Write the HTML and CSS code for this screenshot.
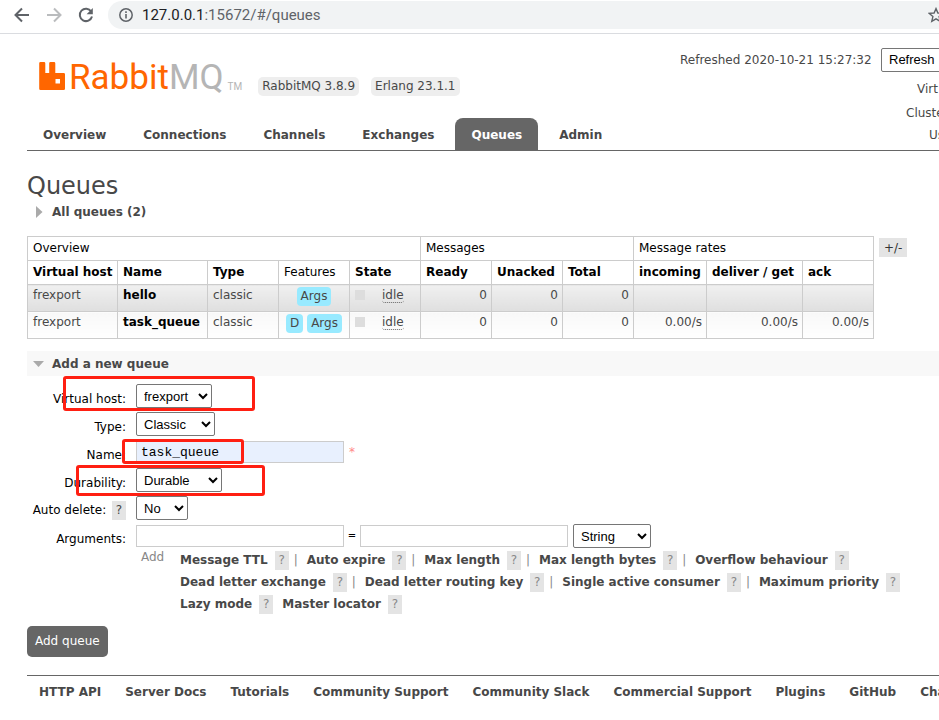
FILE: index.html
```html
<!DOCTYPE html>
<html lang="en">
<head>
<meta charset="utf-8">
<title>RabbitMQ Management</title>
<link rel="stylesheet" href="styles.css">
</head>
<body>
<div class="browser-bar">
  <button class="bar-btn" aria-label="Back"><svg width="16" height="16" viewBox="0 0 16 16" fill="none" stroke="#5f6368" stroke-width="2"><path d="M15 8H2M8 1.500 1.500 8 8 14.500"/></svg></button>
  <button class="bar-btn" aria-label="Forward"><svg width="16" height="16" viewBox="0 0 16 16" fill="none" stroke="#babcbe" stroke-width="2"><path d="M1 8h13M8 1.500 14.500 8 8 14.500"/></svg></button>
  <button class="bar-btn" aria-label="Reload"><svg width="16" height="16" viewBox="0 0 16 16"><path d="M13.200 4.500A6.200 6.200 0 1 0 14 9.500" fill="none" stroke="#5f6368" stroke-width="2"/><path d="M14.800 1v6.200H8.600z" fill="#5f6368"/></svg></button>
  <div class="address">
    <svg width="14" height="14" viewBox="0 0 14 14"><circle cx="7" cy="7" r="6.200" fill="none" stroke="#5f6368" stroke-width="1.500"/><path d="M6.200 6h1.600v4.500H6.200zM6.200 3.300h1.600v1.600H6.200z" fill="#5f6368"/></svg>
    <span class="url"><b>127.0.0.1</b>:15672/#/queues</span>
    <svg class="star" width="16" height="16" viewBox="0 0 16 16" fill="none" stroke="#5f6368" stroke-width="1.400"><path d="M8 1.600 9.900 6l4.800.4-3.600 3.200 1.100 4.700L8 11.800l-4.200 2.500 1.100-4.700L1.300 6.400 6.100 6z"/></svg>
  </div>
</div>

<div class="page">
  <header class="top">
    <div class="brand">
      <a class="logo" href="#/">
        <svg width="27" height="28" viewBox="0 0 27 28"><path fill="#f60" fill-rule="evenodd" d="M1.500 0h3.500a1.300 1.300 0 0 1 1.300 1.300V11h3.900V1.300A1.300 1.300 0 0 1 11.500 0H15a1.300 1.300 0 0 1 1.300 1.300V11h8.400a1.300 1.300 0 0 1 1.300 1.300v14.400a1.300 1.300 0 0 1-1.300 1.300H1.500A1.300 1.300 0 0 1 .2 26.700V1.300A1.300 1.300 0 0 1 1.500 0zM16.500 17h4.500v4.500h-4.500z"/></svg>
        <span class="logo-name">Rabbit<span class="logo-mq">MQ</span></span><span class="logo-tm">TM</span>
      </a>
      <span class="version">RabbitMQ 3.8.9</span>
      <span class="version">Erlang 23.1.1</span>
    </div>
    <div class="status">
      <div class="refresh"><span>Refreshed 2020-10-21 15:27:32</span><button class="refresh-btn">Refresh</button></div>
      <div class="status-vhost">Virt</div>
      <div class="status-cluster">Cluste</div>
      <div class="status-user">Us</div>
    </div>
  </header>
  <nav class="tabs">
    <a href="#/">Overview</a><a href="#/connections">Connections</a><a href="#/channels">Channels</a><a href="#/exchanges">Exchanges</a><a class="selected" href="#/queues">Queues</a><a href="#/users">Admin</a>
  </nav>

  <main>
    <h1>Queues</h1>
    <h2 class="section"><svg width="7" height="12" viewBox="0 0 7 12"><path d="M0 0l6.500 6L0 12z" fill="#aaa"/></svg>All queues (2)</h2>

    <div class="table-wrap">
      <table class="list">
        <colgroup><col class="c-wide"><col class="c-wide"><col><col><col><col><col><col><col class="c-in"><col class="c-get"><col></colgroup>
        <thead>
          <tr class="groups"><th colspan="5">Overview</th><th colspan="3">Messages</th><th colspan="3">Message rates</th></tr>
          <tr><th>Virtual host</th><th>Name</th><th>Type</th><th class="plain">Features</th><th>State</th><th>Ready</th><th>Unacked</th><th>Total</th><th>incoming</th><th>deliver / get</th><th>ack</th></tr>
        </thead>
        <tbody>
          <tr class="alt1"><td>frexport</td><td><a href="#/queues/hello">hello</a></td><td>classic</td><td class="c"><span class="tag">Args</span></td><td><span class="state"><i></i><abbr>idle</abbr></span></td><td class="r">0</td><td class="r">0</td><td class="r">0</td><td></td><td></td><td></td></tr>
          <tr class="alt2"><td>frexport</td><td><a href="#/queues/task_queue">task_queue</a></td><td>classic</td><td class="c"><span class="tag">D</span> <span class="tag">Args</span></td><td><span class="state"><i></i><abbr>idle</abbr></span></td><td class="r">0</td><td class="r">0</td><td class="r">0</td><td class="r">0.00/s</td><td class="r">0.00/s</td><td class="r">0.00/s</td></tr>
        </tbody>
      </table>
      <button class="columns-btn">+/-</button>
    </div>

    <h2 class="section open"><svg width="11" height="6" viewBox="0 0 11 6"><path d="M0 0h11L5.500 6z" fill="#aaa"/></svg>Add a new queue</h2>

    <form class="add-form">
      <div class="row"><label for="vhost">Virtual host:</label><div class="field"><select id="vhost" class="w76"><option>frexport</option></select></div><span class="mark mark-vhost"></span></div>
      <div class="row"><label for="type">Type:</label><div class="field"><select id="type" class="w79"><option>Classic</option></select></div></div>
      <div class="row"><label for="name">Name:</label><div class="field"><input id="name" class="filled" type="text" value="task_queue"><span class="required">*</span></div><span class="mark mark-name"></span></div>
      <div class="row"><label for="durable">Durability:</label><div class="field"><select id="durable" class="w86"><option>Durable</option></select></div><span class="mark mark-durable"></span></div>
      <div class="row"><label for="auto">Auto delete: <span class="help dark">?</span></label><div class="field"><select id="auto" class="w52"><option>No</option></select></div></div>
      <div class="row"><label for="argk">Arguments:</label><div class="field"><input id="argk" type="text"><span class="equals">=</span><input type="text" aria-label="Argument value"><select class="w78 arg-type" aria-label="Argument type"><option>String</option></select></div></div>
      <div class="presets">
        <span class="add">Add</span>
        <div class="preset-lines">
          <div><a href="#">Message TTL</a><span class="help">?</span><s>|</s><a href="#">Auto expire</a><span class="help">?</span><s>|</s><a href="#">Max length</a><span class="help">?</span><s>|</s><a href="#">Max length bytes</a><span class="help">?</span><s>|</s><a href="#">Overflow behaviour</a><span class="help">?</span></div>
          <div><a href="#">Dead letter exchange</a><span class="help">?</span><s>|</s><a href="#">Dead letter routing key</a><span class="help">?</span><s>|</s><a href="#">Single active consumer</a><span class="help">?</span><s>|</s><a href="#">Maximum priority</a><span class="help">?</span></div>
          <div><a href="#">Lazy mode</a><span class="help last">?</span><a href="#">Master locator</a><span class="help">?</span></div>
        </div>
      </div>
      <button class="submit" type="button">Add queue</button>
    </form>
  </main>

  <footer><a href="#">HTTP API</a><a href="#">Server Docs</a><a href="#">Tutorials</a><a href="#">Community Support</a><a href="#">Community Slack</a><a href="#">Commercial Support</a><a href="#">Plugins</a><a href="#">GitHub</a><a href="#">Changelog</a></footer>
</div>
</body>
</html>
```
FILE: styles.css
```css
* { box-sizing: border-box; }
body {
  margin: 0;
  background: #fff;
  color: #484848;
  font: 12px/16px Verdana, "DejaVu Sans", sans-serif;
  overflow: hidden;
}
a { color: inherit; text-decoration: none; }
button { font: inherit; cursor: pointer; }

/* Browser toolbar */
.browser-bar {
  display: flex;
  align-items: center;
  gap: 16px;
  height: 34px;
  padding: 0 0 4px 14px;
  border-bottom: 1px solid #dadce0;
}
.bar-btn { display: flex; padding: 0; border: 0; background: none; }
.address {
  display: flex;
  flex: 1;
  align-items: center;
  height: 28px;
  padding-left: 11px;
  background: #f1f3f4;
  border-radius: 14px 0 0 14px;
  overflow: hidden;
}
.bar-btn:nth-child(3) { margin-right: -2px; }
.url { margin-left: 9px; color: #5f6368; font: 15px/20px Roboto, sans-serif; }
.url b { color: #202124; font-weight: 400; }
.star { flex: none; margin: 0 -5px 0 auto; }

.page { padding-left: 27px; }

/* Header */
.top { display: flex; justify-content: space-between; height: 84px; }
.brand { display: flex; align-items: flex-start; white-space: nowrap; }
.logo { display: flex; margin: 28px 16px 0 12px; height: 34px; }
.logo-name { margin-left: 3px; color: #f60; font: 35px/32px Roboto, sans-serif; }
.logo-mq { color: #b5b5b5; }
.logo-tm { margin: 17px 0 0 4px; color: #b5b5b5; font: 10px/16px Roboto, sans-serif; }
.version { margin: 43px 12px 0 0; padding: 2px 4px; line-height: 15px; background: #eee; border-radius: 5px; }
.status { width: 259px; white-space: nowrap; line-height: 24px; }
.refresh { display: flex; align-items: center; justify-content: space-between; height: 24px; margin: 14px 0 5px; }
.refresh-btn {
  flex: none;
  width: 68px;
  height: 24px;
  margin-right: -10px;
  padding: 0 7px;
  text-align: left;
  color: #000;
  background: #fff;
  border: 1px solid #767676;
  border-radius: 2px;
  font: 13px/20px "Liberation Sans", sans-serif;
}
.status-vhost { padding-left: 237px; }
.status-cluster { padding-left: 226px; }
.status-user { padding-left: 249px; line-height: 20px; }

/* Tabs */
.tabs { display: flex; gap: 5px; border-bottom: 1px solid #666; font-weight: 700; }
.tabs a { padding: 9px 16px 7px; border-radius: 8px 8px 0 0; }
.tabs .selected { color: #fff; background: #666; }

/* Headings */
h1 { margin: 20px 0 0; font-size: 24px; line-height: 30px; font-weight: 400; }
h2.section { display: flex; align-items: center; gap: 9px; margin: 0 0 12px; padding: 3px 0 4px 9px; font-size: 12px; line-height: 16px; }
h2.open { margin: 12px 0 6px; padding: 5px 0 4px 6px; background: #f8f8f8; gap: 8px; }

/* Queue table */
.table-wrap { display: flex; align-items: flex-start; gap: 5px; }
.list { width: 847px; border-collapse: collapse; table-layout: fixed; white-space: nowrap; }
.c-wide { width: 90px; }
.c-in { width: 73px; }
.c-get { width: 96px; }
.list th, .list td { padding: 2px 5px; border: 1px solid #ccc; text-align: left; vertical-align: top; }
.list th { height: 24px; padding-top: 3px; color: #000; }
.groups th, .list th.plain { font-weight: 400; }
.list td { height: 27px; }
.list td a { color: #000; font-weight: 700; }
.list .r { text-align: right; padding-right: 4px; }
.list .c { text-align: center; }
.alt1 td { background: linear-gradient(#f0f0f0, #dfdfdf); }
.alt2 td { background: linear-gradient(#f8f8f8, #fff); }
.tag { display: inline-block; padding: 1px 4px; line-height: 17px; background: #98eaff; border-radius: 4px; }
.state { display: flex; gap: 17px; }
.state i { width: 10px; height: 10px; margin-top: 3px; background: #ddd; }
.state abbr { height: 16px; border-bottom: 1px dotted #666; border-radius: 3px; }
.columns-btn { margin-top: 2px; padding: 0 5px; height: 19px; border: 0; background: #e4e4e4; color: #333; }

/* Add queue form */
.row { position: relative; display: flex; align-items: center; height: 28px; color: #000; }
.row label { width: 99px; padding-top: 5px; text-align: right; white-space: nowrap; }
.row .field { display: flex; align-items: center; margin-left: 10px; }
select {
  height: 24px;
  padding: 0 3px;
  color: #000;
  background: #fff;
  border: 1px solid #767676;
  border-radius: 2px;
  font: 13px/20px "Liberation Sans", sans-serif;
}
.w52 { width: 52px; }
.w76 { width: 76px; }
.w78 { width: 78px; }
.w79 { width: 79px; }
.w86 { width: 86px; }
.arg-type { margin-left: 5px; }
input {
  width: 208px;
  height: 22px;
  padding: 2px 4px;
  border: 1px solid #ccc;
  color: #000;
  font: 13px/16px "Liberation Mono", monospace;
}
.filled { background: #e8f0fe; }
.required { margin-left: 5px; color: #f88; }
.equals { width: 16px; text-align: center; font-size: 10px; }
.help { display: inline-block; width: 14px; height: 19px; line-height: 19px; text-align: center; color: #888; background: #e4e4e4; }
.help.dark { margin-left: 2px; color: #484848; }

/* Red frames laid over the form */
.mark { position: absolute; border: 3px solid #ff1f12; border-radius: 3px; z-index: 1; pointer-events: none; }
.mark-vhost { left: 36px; top: -6px; width: 192px; height: 35px; }
.mark-name { left: 95px; top: 1px; width: 122px; height: 25px; }
.mark-durable { left: 49px; top: -1px; width: 189px; height: 31px; }

.presets { display: flex; margin: -1px 0 0 114px; white-space: nowrap; color: #888; }
.add { width: 39px; }
.preset-lines > div { display: flex; align-items: center; height: 22px; }
.preset-lines a { margin-right: 7px; color: #484848; font-weight: 700; }
.preset-lines s { width: 18px; padding-left: 5px; text-decoration: none; }
.preset-lines .last { margin-right: 9px; }
.submit { display: block; margin-top: 11px; padding: 7px 8px; line-height: 17px; color: #fff; background: #666; border: 0; border-radius: 5px; }

/* Footer */
footer { display: flex; gap: 24px; margin-top: 18px; padding: 8px 0 20px 12px; border-top: 1px solid #666; font-weight: 700; white-space: nowrap; }
```
